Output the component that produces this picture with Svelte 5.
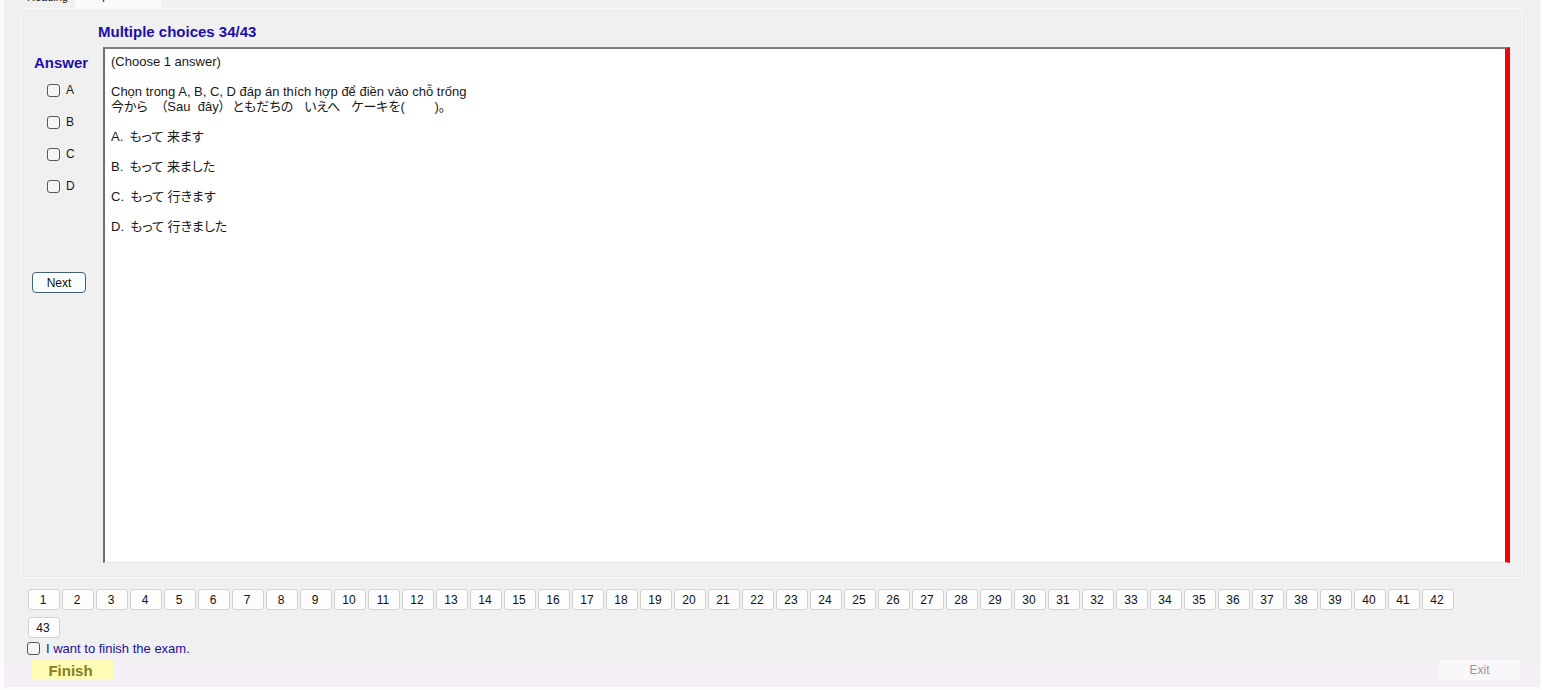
<script>
  const tabs = ['Reading', 'Multiple choices'];
  const choices = ['A', 'B', 'C', 'D'];
  const options = [
    { key: 'A', text: 'もって 来ます' },
    { key: 'B', text: 'もって 来ました' },
    { key: 'C', text: 'もって 行きます' },
    { key: 'D', text: 'もって 行きました' }
  ];
  const questions = Array.from({ length: 43 }, (_, i) => i + 1);
  let selected = $state([]);
  let wantFinish = $state(false);
</script>

<div class="window">
  <div class="tabs" role="tablist">
    {#each tabs as tab, i}
      <button class="tab" class:active={i === 1} role="tab" aria-selected={i === 1}>{tab}</button>
    {/each}
  </div>

  <main class="page">
    <h1>Multiple choices 34/43</h1>
    <div class="body">
      <section class="answers">
        <h2>Answer</h2>
        {#each choices as choice}
          <label class="choice">
            <input type="checkbox" value={choice} bind:group={selected} />
            <span>{choice}</span>
          </label>
        {/each}
        <button class="next">Next</button>
      </section>
      <article class="question">
        <p>(Choose 1 answer)</p>
        <p>
          Chọn trong A, B, C, D đáp án thích hợp để điền vào chỗ trống<br />
          <span class="ja">今から　（Sau&nbsp; đây）&nbsp; ともだちの&nbsp;&nbsp; いえへ&nbsp;&nbsp; ケーキを(　　 )。</span>
        </p>
        {#each options as option}
          <p class="option"><span>{option.key}.</span><span class="ja">{option.text}</span></p>
        {/each}
      </article>
    </div>
  </main>

  <nav class="numbers" aria-label="Questions">
    {#each questions as n}
      <button>{n}</button>
    {/each}
  </nav>

  <label class="confirm">
    <input type="checkbox" bind:checked={wantFinish} />
    <span>I want to finish the exam.</span>
  </label>
  <footer>
    <button class="finish">Finish</button>
    <button class="exit" disabled>Exit</button>
  </footer>
</div>

<style>
  :global(body) {
    background: #fbfbfb;
    font-family: 'Liberation Sans', 'Noto Sans CJK JP', sans-serif;
    color: #181818;
  }
  .window {
    margin: 0 2px 0 4px;
    background: linear-gradient(#f0f0f0 94%, #f3eff4 97%);
    overflow: hidden;
    padding-bottom: 7px;
  }
  button {
    font-family: inherit;
    padding: 0;
    color: #111;
  }
  h1,
  h2,
  p {
    margin: 0;
  }
  .tabs {
    display: flex;
    align-items: flex-end;
    height: 8px;
    margin: 0 18px;
    border-bottom: 1px solid #fafafa;
  }
  .tab {
    height: 20px;
    border: 0;
    background: none;
    font-size: 11px;
    line-height: 12px;
    padding: 3px 5px 5px;
    white-space: nowrap;
  }
  .tab.active {
    background: #fafafa;
    padding: 2px 4px 6px;
    margin-left: 2px;
  }
  .page {
    margin: 3px 18px 0 17px;
    padding: 10px 11px 14px 9px;
    border: 1px solid #fafafa;
    border-top: 0;
    box-shadow: inset 0 0 0 1px #ebebeb;
  }
  h1,
  h2,
  .finish {
    font-size: 15px;
    font-weight: bold;
  }
  h1,
  h2 {
    color: #1c0fa8;
    line-height: 20px;
  }
  h1 {
    padding-left: 67px;
  }
  .body {
    display: flex;
    margin-top: 5px;
  }
  .answers {
    width: 72px;
    flex: none;
    padding-top: 6px;
  }
  h2 {
    padding-left: 3px;
    margin-bottom: 1px;
  }
  .choice {
    display: flex;
    align-items: center;
    gap: 6px;
    height: 32px;
    padding-left: 16px;
    font-size: 12px;
  }
  input[type='checkbox'] {
    appearance: none;
    width: 13px;
    height: 13px;
    margin: 0;
    border: 1px solid #555;
    border-radius: 3px;
    background: #f5f5f5;
  }
  input[type='checkbox']:checked {
    background: #1f6fb5;
  }
  .next {
    display: block;
    width: 54px;
    height: 21px;
    margin: 70px 0 0 1px;
    border: 1px solid #3f6076;
    border-radius: 4px;
    background: #f8fdfd;
    font-size: 12px;
  }
  .question {
    flex: 1;
    min-height: 505px;
    padding: 5px 6px 3px;
    border-top: 2px solid #7d7d7d;
    border-left: 2px solid #6e6e6e;
    border-bottom: 1px solid #e3e3e3;
    border-right: 5px solid #ee0606;
    background: #fff;
    font-size: 13px;
    line-height: 15px;
  }
  .question p {
    margin-bottom: 15px;
  }
  .ja {
    font-feature-settings: 'palt';
  }
  .option {
    display: flex;
    gap: 6px;
  }
  .numbers {
    display: flex;
    flex-wrap: wrap;
    gap: 7px 2px;
    padding: 11px 80px 0 24px;
  }
  .numbers button {
    width: 32px;
    height: 21px;
    padding-right: 2px;
    border: 1px solid #d2d2d2;
    border-radius: 3px;
    background: #fdfdfd;
    font-size: 12px;
  }
  .confirm {
    display: flex;
    align-items: center;
    gap: 6px;
    padding-left: 23px;
    height: 20px;
    color: #1c0f9c;
    font-size: 13px;
  }
  footer {
    display: flex;
    justify-content: space-between;
    padding: 2px 20px 0 28px;
  }
  footer button {
    border: 0;
    width: 81px;
    height: 20px;
  }
  .finish {
    background: #fdfbb4;
    color: #85801a;
    padding-right: 4px;
  }
  .exit {
    background: #faf7fb;
    color: #9a989c;
    font-size: 12px;
  }
</style>
